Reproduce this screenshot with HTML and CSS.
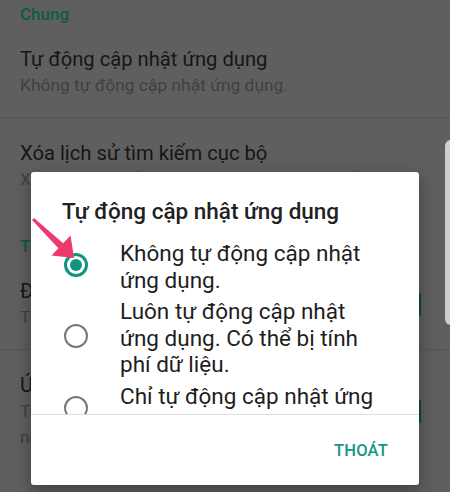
FILE: index.html
```html
<!DOCTYPE html>
<html lang="vi">
<head>
<meta charset="utf-8">
<title>Cài đặt</title>
<link rel="stylesheet" href="styles.css">
</head>
<body>
<div class="screen">
  <div class="settings">
    <div class="section-head first">Chung</div>
    <div class="item divided">
      <div class="item-text">
        <div class="item-title">Tự động cập nhật ứng dụng</div>
        <div class="item-sub">Không tự động cập nhật ứng dụng.</div>
      </div>
    </div>
    <div class="item">
      <div class="item-text">
        <div class="item-title">Xóa lịch sử tìm kiếm cục bộ</div>
        <div class="item-sub">Xóa các tìm kiếm bạn đã thực hiện trên thiết bị này</div>
      </div>
    </div>
    <div class="section-head">Tùy chọn người dùng</div>
    <div class="item divided">
      <div class="item-text">
        <div class="item-title">Đề xuất ứng dụng</div>
        <div class="item-sub">Thêm biểu tượng vào Màn hình chính</div>
      </div>
      <div class="check"></div>
    </div>
    <div class="item last">
      <div class="item-text">
        <div class="item-title">Ứng dụng tức thì</div>
        <div class="item-sub">Tự động mở liên kết web trong ứng dụng<br>nếu được hỗ trợ</div>
      </div>
      <div class="check"></div>
    </div>
    <div class="section-head">Kiểm soát của người dùng</div>
  </div>

  <div class="edge-handle"></div>

  <div class="dialog">
    <div class="dialog-title">Tự động cập nhật ứng dụng</div>
    <div class="options">
      <div class="option">
        <span class="radio checked"></span>
        <span class="option-text">Không tự động cập nhật ứng dụng.</span>
      </div>
      <div class="option">
        <span class="radio"></span>
        <span class="option-text">Luôn tự động cập nhật ứng dụng. Có thể bị tính phí dữ liệu.</span>
      </div>
      <div class="option">
        <span class="radio"></span>
        <span class="option-text">Chỉ tự động cập nhật ứng dụng qua Wi-Fi.</span>
      </div>
    </div>
    <div class="actions">
      <span class="btn">THOÁT</span>
    </div>
  </div>

  <svg class="arrow" width="60" height="60" viewBox="0 0 60 60">
    <polygon points="12,15 14,13 43.4,38.5 38.6,43.5" fill="#ec3a6e"/>
    <polygon points="54,53 50.5,30.5 31.5,50.5" fill="#ec3a6e"/>
  </svg>
</div>
</body>
</html>
```

FILE: styles.css
```css
html, body {
  margin: 0;
  padding: 0;
}
body {
  width: 450px;
  height: 492px;
  overflow: hidden;
  background: #5f5f5f;
  font-family: Roboto, "Noto Sans", "DejaVu Sans", sans-serif;
}
.screen {
  position: relative;
  width: 450px;
  height: 492px;
  overflow: hidden;
}
.settings {
  display: flex;
  flex-direction: column;
}
.section-head {
  font-size: 17px;
  font-weight: 500;
  line-height: 20px;
  color: #0d5a4a;
  padding: 25px 20px 0;
}
.section-head.first {
  padding-top: 4px;
}
.item {
  display: flex;
  align-items: center;
  padding: 22px 29px 19px 20px;
}
.item.divided {
  border-bottom: 1px solid #555555;
}
.item.last {
  padding-bottom: 18px;
}
.item-text {
  flex: 1;
  min-width: 0;
}
.item-title {
  font-size: 20.2px;
  line-height: 26px;
  color: #161616;
  white-space: nowrap;
}
.item-sub {
  font-size: 17.4px;
  line-height: 26px;
  color: #404040;
  white-space: nowrap;
}
.check {
  width: 23px;
  height: 23px;
  border-radius: 2px;
  background: #0a4a3d;
  flex: none;
}
.edge-handle {
  position: absolute;
  left: 445px;
  top: 140px;
  width: 12px;
  height: 185px;
  border-radius: 6px;
  background: #cfcfcf;
}
.dialog {
  position: absolute;
  left: 31px;
  top: 172px;
  width: 388px;
  height: 313px;
  background: #ffffff;
  border-radius: 3px;
  box-shadow: 0 6px 18px rgba(0, 0, 0, 0.35);
  display: flex;
  flex-direction: column;
}
.dialog-title {
  padding: 26px 31px 0;
  font-size: 22.5px;
  font-weight: 500;
  line-height: 26px;
  color: #212121;
}
.options {
  margin-top: 16px;
  height: 174px;
  overflow: hidden;
  border-bottom: 1px solid #dedede;
  display: flex;
  flex-direction: column;
  gap: 5px;
}
.option {
  display: flex;
  align-items: center;
  padding-left: 33px;
}
.radio {
  flex: none;
  box-sizing: border-box;
  width: 24px;
  height: 24px;
  border-radius: 50%;
  border: 2px solid #777777;
  position: relative;
  margin-top: -3px;
}
.radio.checked {
  border: 3px solid #119583;
}
.radio.checked::after {
  content: "";
  position: absolute;
  left: 3px;
  top: 3px;
  width: 12px;
  height: 12px;
  border-radius: 50%;
  background: #119583;
}
.option-text {
  margin-left: 32px;
  width: 264px;
  font-size: 22.5px;
  line-height: 26.5px;
  color: #1e1e1e;
}
.actions {
  flex: 1;
  display: flex;
  align-items: center;
  justify-content: flex-end;
  padding-right: 31px;
}
.btn {
  font-size: 16.5px;
  font-weight: 500;
  color: #169586;
  letter-spacing: 0.2px;
}
.arrow {
  position: absolute;
  left: 20px;
  top: 205px;
}
```
